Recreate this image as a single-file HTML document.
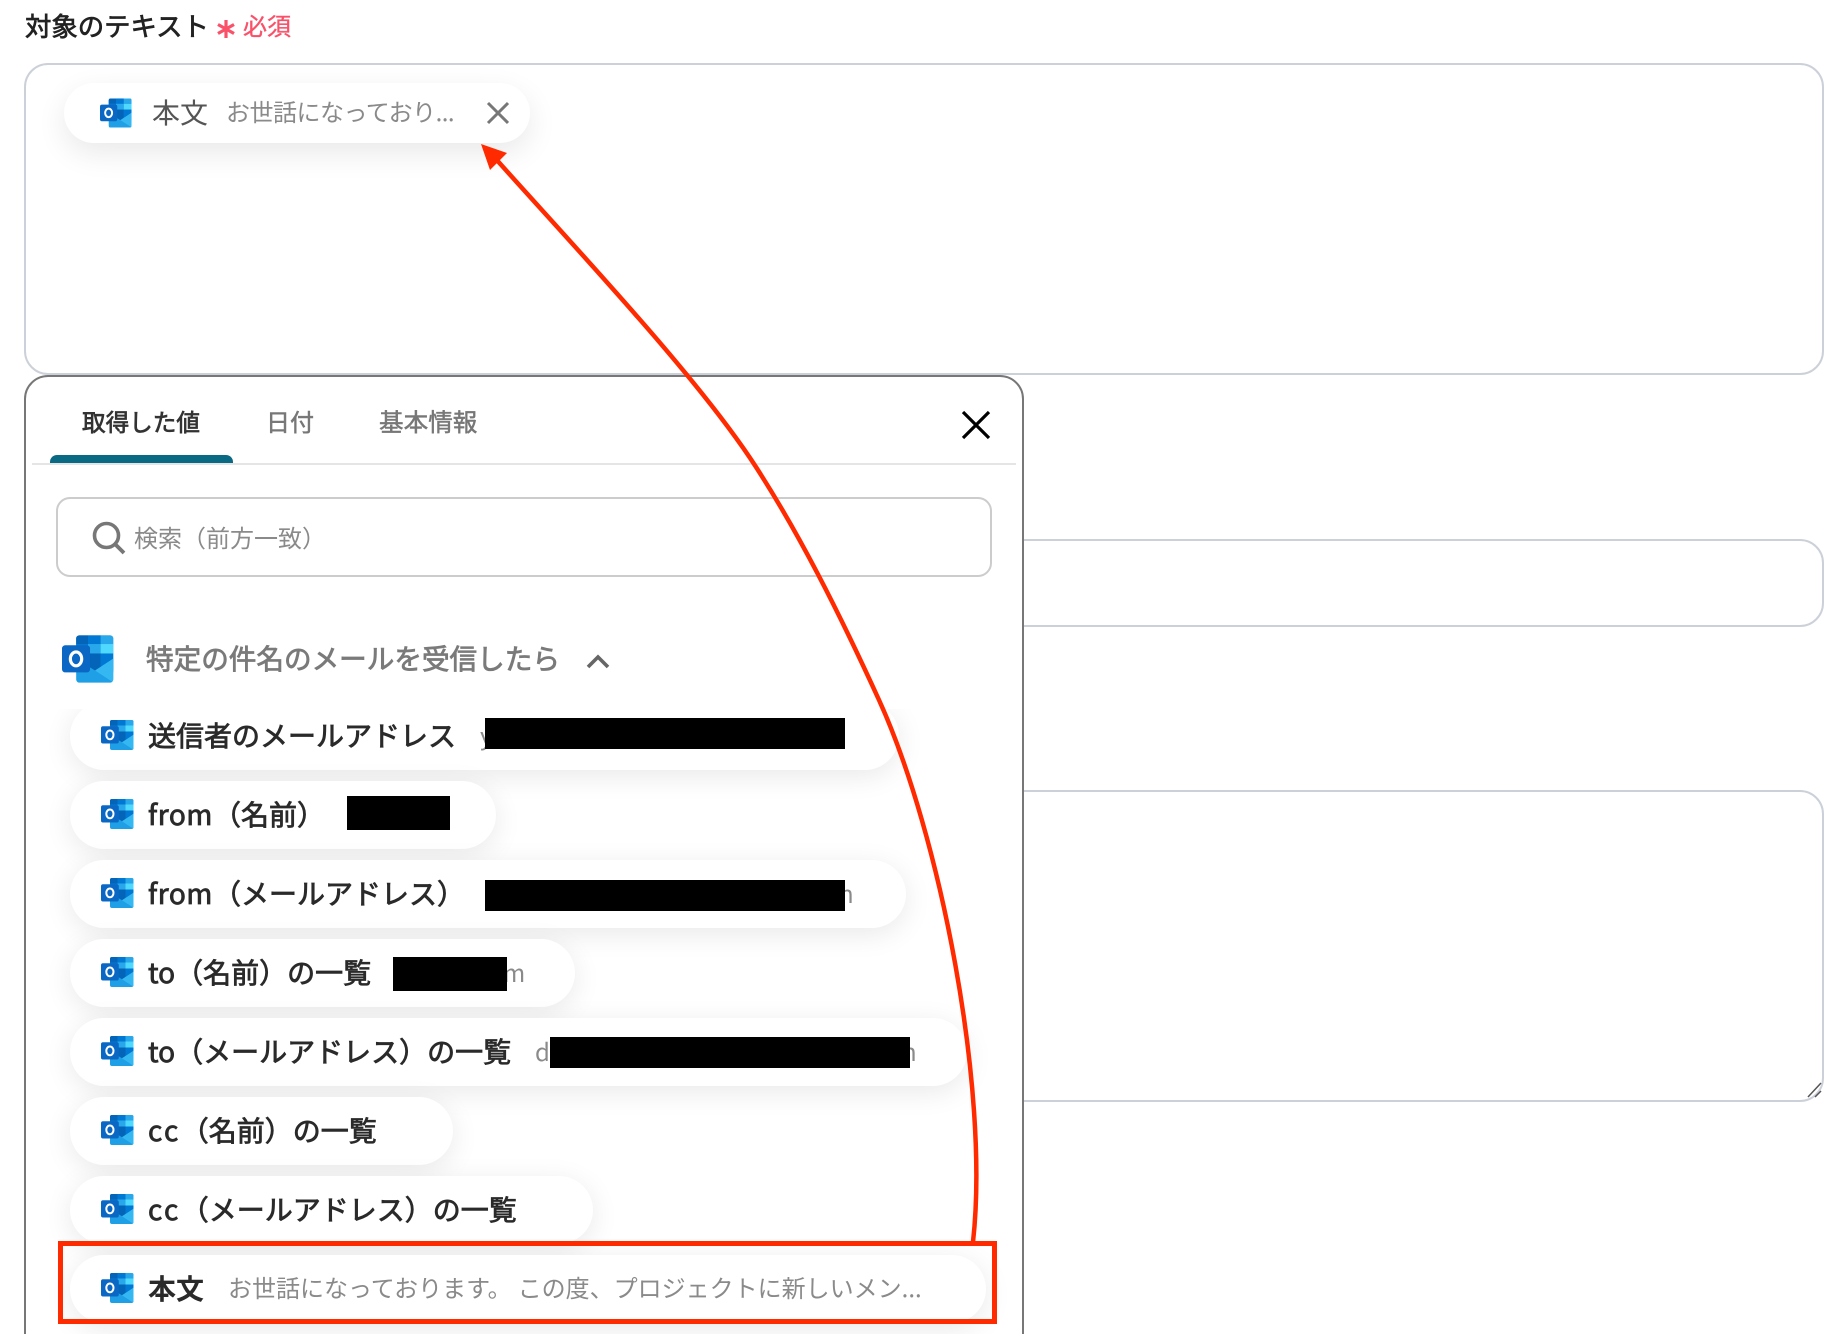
<!DOCTYPE html>
<html lang="ja">
<head>
<meta charset="utf-8">
<style>
html,body{margin:0;padding:0;background:#fff;width:1842px;height:1334px;overflow:hidden}
#root{position:relative;width:1842px;height:1334px;overflow:hidden;font-family:"Noto Sans CJK JP","Liberation Sans",sans-serif}
.a{position:absolute}
.t{position:absolute;white-space:nowrap;line-height:40px;height:40px}
.box{position:absolute;box-sizing:border-box;border:2px solid #ccd1d9;background:#fff}
.chip{position:absolute;left:44px;height:68px;border-radius:34px;background:#fff;box-shadow:0 6px 28px rgba(0,0,0,.09)}
.n{font-size:28px;color:#2a2a2a;-webkit-text-stroke:.8px #2a2a2a}
.s{font-size:24px;color:#8a8a8a}
.k{position:absolute;background:#000}
</style>
</head>
<body>
<div id="root">
<svg width="0" height="0" style="position:absolute">
<symbol id="ol" viewBox="0 0 33 30">
<rect x="9" y="0" width="23.5" height="24" rx="2" fill="#0078d4"/>
<path d="M11 0H16.5V5.5H9V2a2 2 0 0 1 2-2Z" fill="#0364b8"/>
<rect x="16.5" y="0" width="8" height="5.5" fill="#0078d4"/>
<path d="M24.5 0H30.5a2 2 0 0 1 2 2V5.5H24.5Z" fill="#28a8ea"/>
<rect x="9" y="5.5" width="7.5" height="6" fill="#0078d4"/>
<rect x="16.5" y="5.5" width="8" height="6" fill="#28a8ea"/>
<rect x="24.5" y="5.5" width="8" height="6" fill="#50d9ff"/>
<rect x="16.5" y="11.5" width="8" height="12" fill="#0364b8"/>
<rect x="24.5" y="11.5" width="8" height="12" fill="#0078d4"/>
<path d="M9 15L21 22.3L32.5 14.8V28a2 2 0 0 1-2 2H11a2 2 0 0 1-2-2Z" fill="#1f9fe6"/>
<path d="M32.5 14.8V28a2 2 0 0 1-.6 1.4L21 22.3Z" fill="#35b8f1"/>
<rect x="0" y="6.3" width="17.8" height="17.2" rx="2" fill="#0a68c4"/>
<ellipse cx="8.9" cy="14.9" rx="3.6" ry="4.4" fill="none" stroke="#fff" stroke-width="2"/>
</symbol>
</svg>

<!-- label -->
<div class="t" style="left:25px;top:5px;font-size:26.4px;color:#222;-webkit-text-stroke:.7px #222">対象のテキスト</div>
<svg class="a" style="left:216px;top:19px" width="20" height="20" viewBox="0 0 20 20"><path d="M10 1V19M2 5.5L18 14.5M18 5.5L2 14.5" stroke="#f9516a" stroke-width="3.2" fill="none"/></svg>
<div class="t" style="left:243px;top:5px;font-size:24px;color:#f9516a;-webkit-text-stroke:.35px #f9516a">必須</div>

<!-- form boxes -->
<div class="box" style="left:24px;top:63px;width:1800px;height:312px;border-radius:24px"></div>
<div class="box" style="left:900px;top:539px;width:924px;height:88px;border-radius:24px"></div>
<div class="box" style="left:900px;top:790px;width:924px;height:312px;border-radius:24px"></div>
<svg class="a" style="left:1804px;top:1080px" width="20" height="20"><path d="M4 17L17 3M11 17L17 11" stroke="#555" stroke-width="1.5" fill="none"/></svg>

<!-- top chip -->
<div class="a" style="left:64px;top:83px;width:466px;height:60px;border-radius:30px;background:#fff;box-shadow:0 10px 30px rgba(0,0,0,.09)"></div>
<svg class="a" style="left:100px;top:98px" width="32" height="30"><use href="#ol"/></svg>
<div class="t" style="left:152px;top:92px;font-size:28px;color:#555">本文</div>
<div class="t" style="left:226px;top:91px;font-size:24px;color:#8a8a8a;letter-spacing:-.5px">お世話になっており...</div>
<svg class="a" style="left:485px;top:100px" width="26" height="26"><path d="M3 3L23 23M23 3L3 23" stroke="#777" stroke-width="3" fill="none"/></svg>

<!-- panel -->
<div class="a" style="left:24px;top:375px;width:1000px;height:1010px;box-sizing:border-box;border:2px solid #777;border-radius:24px;background:#fff"></div>
<div class="t" style="left:82px;top:401px;font-size:23.6px;color:#333;-webkit-text-stroke:.7px #333">取得した値</div>
<div class="t" style="left:266px;top:401px;font-size:24px;color:#777;-webkit-text-stroke:.5px #777">日付</div>
<div class="t" style="left:379px;top:401px;font-size:24.6px;color:#777;-webkit-text-stroke:.5px #777">基本情報</div>
<div class="a" style="left:50px;top:455px;width:183px;height:8px;background:#0a6a84;border-radius:7px 7px 0 0"></div>
<div class="a" style="left:32px;top:463px;width:984px;height:2px;background:#e4e5e7"></div>
<svg class="a" style="left:960px;top:409px" width="32" height="32"><path d="M3 3L29 29M29 3L3 29" stroke="#000" stroke-width="3.2" fill="none"/></svg>

<div class="a" style="left:56px;top:497px;width:936px;height:80px;box-sizing:border-box;border:2px solid #ccc;border-radius:14px;background:#fff"></div>
<svg class="a" style="left:92px;top:521px" width="34" height="34" viewBox="0 0 34 34"><circle cx="14.5" cy="14.5" r="12" fill="none" stroke="#777" stroke-width="3.6"/><path d="M23 23L32 32" stroke="#777" stroke-width="3.8" fill="none"/></svg>
<div class="t" style="left:134px;top:517px;font-size:24px;color:#8a8a8a">検索（前方一致）</div>

<svg class="a" style="left:62px;top:635px" width="52" height="48"><use href="#ol"/></svg>
<div class="t" style="left:146px;top:637px;font-size:27.6px;color:#7a7a7a;-webkit-text-stroke:.8px #7a7a7a">特定の件名のメールを受信したら</div>
<svg class="a" style="left:585px;top:652px" width="26" height="18"><path d="M3 15L13 5L23 15" stroke="#666" stroke-width="3.6" fill="none"/></svg>

<!-- list -->
<div class="a" style="left:26px;top:709px;width:996px;height:625px;overflow:hidden">
  <div class="chip" style="top:-7px;width:829px"></div>
  <div class="chip" style="top:72px;width:426px"></div>
  <div class="chip" style="top:151px;width:836px"></div>
  <div class="chip" style="top:230px;width:505px"></div>
  <div class="chip" style="top:309px;width:897px"></div>
  <div class="chip" style="top:388px;width:383px"></div>
  <div class="chip" style="top:467px;width:523px"></div>
  <div class="chip" style="top:546px;width:916px"></div>
</div>

<svg class="a" style="left:101px;top:720px" width="33" height="30"><use href="#ol"/></svg>
<svg class="a" style="left:101px;top:799px" width="33" height="30"><use href="#ol"/></svg>
<svg class="a" style="left:101px;top:878px" width="33" height="30"><use href="#ol"/></svg>
<svg class="a" style="left:101px;top:957px" width="33" height="30"><use href="#ol"/></svg>
<svg class="a" style="left:101px;top:1036px" width="33" height="30"><use href="#ol"/></svg>
<svg class="a" style="left:101px;top:1115px" width="33" height="30"><use href="#ol"/></svg>
<svg class="a" style="left:101px;top:1194px" width="33" height="30"><use href="#ol"/></svg>
<svg class="a" style="left:101px;top:1273px" width="33" height="30"><use href="#ol"/></svg>

<div class="t n" style="left:148px;top:715px">送信者のメールアドレス</div>
<div class="t n" style="left:148px;top:794px"><span style="letter-spacing:.6px">from</span>（名前）</div>
<div class="t n" style="left:148px;top:873px"><span style="letter-spacing:.6px">from</span>（メールアドレス）</div>
<div class="t n" style="left:148px;top:952px">to（名前）の一覧</div>
<div class="t n" style="left:148px;top:1031px">to（メールアドレス）の一覧</div>
<div class="t n" style="left:148px;top:1110px"><span style="letter-spacing:2.4px">cc</span>（名前）の一覧</div>
<div class="t n" style="left:148px;top:1189px"><span style="letter-spacing:2.4px">cc</span>（メールアドレス）の一覧</div>
<div class="t n" style="left:148px;top:1268px;font-weight:700;-webkit-text-stroke:0">本文</div>

<div class="t s" style="left:480px;top:715px">y</div>
<div class="t s" style="left:839px;top:873px">n</div>
<div class="t s" style="left:503px;top:952px">m</div>
<div class="t s" style="left:535px;top:1031px">d</div>
<div class="t s" style="left:902px;top:1031px">n</div>
<div class="t s" style="left:228px;top:1267px">お世話になっております。<span style="margin-left:6px">この度、プロジェクトに新しいメン...</span></div>

<div class="k" style="left:485px;top:718px;width:360px;height:31px"></div>
<div class="k" style="left:347px;top:796px;width:103px;height:34px"></div>
<div class="k" style="left:485px;top:880px;width:360px;height:31px"></div>
<div class="k" style="left:393px;top:957px;width:114px;height:34px"></div>
<div class="k" style="left:550px;top:1037px;width:360px;height:31px"></div>

<!-- annotations -->
<div class="a" style="left:58px;top:1241px;width:939px;height:83px;box-sizing:border-box;border:5px solid #ff2a00"></div>
<svg class="a" style="left:0;top:0" width="1842" height="1334" viewBox="0 0 1842 1334">
<path d="M973 1242C990 1090 940 834 879 700C837 608 798 532 756 467C700 380 580 253 495 158" fill="none" stroke="#ff2a00" stroke-width="4.5"/>
<path d="M481 144L507 153L490 170Z" fill="#ff2a00"/>
</svg>
</div>
</body>
</html>
